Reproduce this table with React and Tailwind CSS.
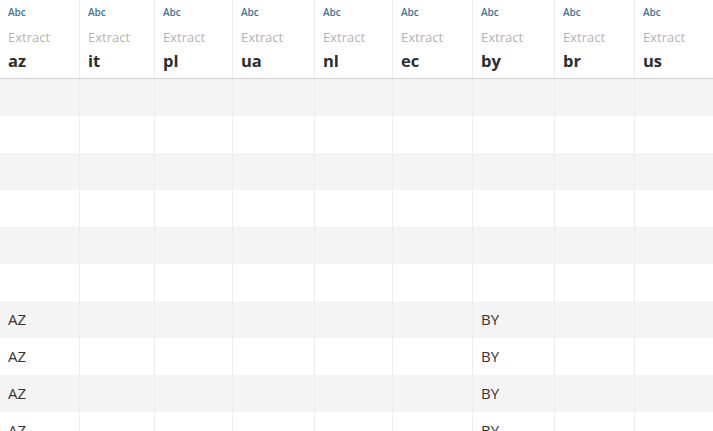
import React from "react";

const cols = [
  { name: "az", w: "w-[80px]" },
  { name: "it", w: "w-[75px]" },
  { name: "pl", w: "w-[78px]" },
  { name: "ua", w: "w-[82px]" },
  { name: "nl", w: "w-[78px]" },
  { name: "ec", w: "w-[80px]" },
  { name: "by", w: "w-[82px]" },
  { name: "br", w: "w-[80px]" },
  { name: "us", w: "w-[100px]" },
];

const rows = [
  {}, {}, {}, {}, {}, {},
  { az: "AZ", by: "BY" },
  { az: "AZ", by: "BY" },
  { az: "AZ", by: "BY" },
  { az: "AZ", by: "BY" },
  { az: "AZ", by: "BY" },
];

export default function App() {
  return (
    <div className="w-[713px] h-[431px] overflow-hidden bg-white font-['Open_Sans',sans-serif]">
      <div className="flex border-b border-[#cfcfcf] h-[79px]">
        {cols.map((c) => (
          <div key={c.name} className={`${c.w} shrink-0 border-r border-[#ededed] pl-2 flex flex-col`}>
            <div className="text-[10px] leading-none font-semibold text-[#3d7791] mt-[7px] h-[10px]">Abc</div>
            <div className="text-[13px] leading-none text-[#b3b3b3] mt-[14px]">Extract</div>
            <div className="text-[16.5px] leading-none font-bold text-[#2e2e2e] mt-[9px]">{c.name}</div>
          </div>
        ))}
      </div>
      {rows.map((r, i) => (
        <div key={i} className={`flex h-[37px] ${i % 2 === 0 ? "bg-[#f4f4f4]" : "bg-white"}`}>
          {cols.map((c) => (
            <div key={c.name} className={`${c.w} shrink-0 border-r border-[#ededed] pl-2 flex items-center text-[15px] text-[#333333]`}>
              {r[c.name] || ""}
            </div>
          ))}
        </div>
      ))}
    </div>
  );
}
